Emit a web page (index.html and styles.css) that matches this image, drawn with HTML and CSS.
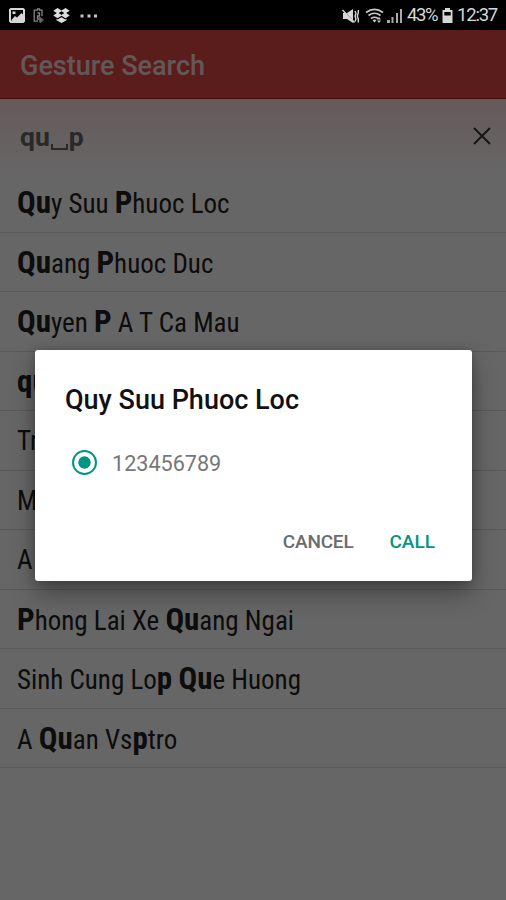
FILE: index.html
```html
<!DOCTYPE html>
<html lang="en">

<head>
  <meta charset="UTF-8" />
  <title>Gesture Search</title>
  <link rel="stylesheet" href="styles.css">
</head>

<body>
  <div class="status-bar">
    <div class="status-left">
      <svg class="ic-image" width="16" height="15" viewBox="0 0 16 15">
        <path fill="#d6d6d6" fill-rule="evenodd" d="M1.500 0h13L16 1.500V13.500L14.500 15h-13L0 13.500V1.500zM2 2v10.800h12V2z" />
        <path fill="#d6d6d6" d="M2.500 12L6 8l2 1.500L12.500 5l1.500 1.500V13H2.500zM3.500 3.500h3v2.500h-3z" />
      </svg>
      <svg class="ic-battery-saver" width="12" height="16" viewBox="0 0 12 16" fill="none" stroke="#858585" stroke-width="1.300">
        <path d="M3 2.200h1.500V.8h2v1.400H9V8M3 2.200H1.200v11H5M4.500 5h2v3h-2v3h2" />
        <path d="M6 8.500l4.500 3.500-3.500 3z" fill="#666" stroke="#666" stroke-width=".8" />
      </svg>
      <svg class="ic-dropbox" width="17" height="15" viewBox="0 0 17 15">
        <path fill="#dedede" d="M4.500 0L8.500 2.500l4-2.500 4.200 2.700-3.500 2.400 3.500 2.400-4.200 2.700-4-2.500-4 2.500L.3 7.500l3.500-2.400L.3 2.700zM8.500 9.200l3.800 2.300 1.200-.7v1.500l-5 2.700-5-2.700v-1.500l1.200.7z" />
        <path fill="#000" d="M8.500 3.300l2.800 1.800-2.800 1.800-2.800-1.800z" />
      </svg>
      <svg class="ic-more" width="18" height="4" viewBox="0 0 18 4">
        <path fill="#c4c4c4" d="M.5.500h3v3h-3zM7.500.500h3v3h-3zM14 .5h3v3h-3z" />
      </svg>
    </div>
    <div class="status-right">
      <svg class="ic-mute" width="18" height="16" viewBox="0 0 18 16">
        <path fill="#d6d6d6" d="M1 5h4l6-4v14l-6-4H1z" />
        <path fill="none" stroke="#000" stroke-width="1" d="M1.500 2l11 12.500" />
        <path fill="none" stroke="#d6d6d6" stroke-width="1.400" d="M.5 2l12 12.500M13 3l1 2.500-1 2.500 1 3-1 2.500M16.300 2v3l-1 3 1 3v3.500" />
      </svg>
      <svg class="ic-wifi" width="19" height="16" viewBox="0 0 19 16" fill="none" stroke="#c8c8c8">
        <path stroke-width="1.700" d="M1 4.500Q9.500-1.800 18 4.500M3.500 7.500q6-4.500 12 0M6 10.500q3.500-2.500 7 0" />
        <path fill="#c8c8c8" stroke="none" d="M7.500 12.200q2-1.500 4 0l-2 2.300zM12 11.500l2-2.500 2 2.500zM12 12.500h4l-2 2.500z" />
      </svg>
      <svg class="ic-signal" width="16" height="15" viewBox="0 0 16 15">
        <path fill="#a9a9a9" d="M0 12h3v3H0zM4.500 9h2v6h-2zM9 5h2v10H9zM13 1h2v14h-2z" />
      </svg>
      <span class="percent">43%</span>
      <svg class="ic-battery" width="11" height="15" viewBox="0 0 11 15">
        <path fill="#d6d6d6" fill-rule="evenodd" d="M3 0h5v2h2.500v13H.5V2H3zM2.300 4v3.500h6.400V4z" />
      </svg>
      <span class="clock">12:37</span>
    </div>
  </div>

  <div class="app">
    <div class="header"><span>Gesture Search</span></div>
    <div class="query">
      <span class="query-text">qu<i class="space"></i>p</span>
      <svg class="clear" width="18" height="18" viewBox="0 0 18 18" fill="none" stroke="#333" stroke-width="1.900">
        <path d="M1 1l16 16M17 1L1 17" />
      </svg>
    </div>
    <div class="results">
      <div class="row"><span><b>Qu</b>y Suu <b>P</b>huoc Loc</span></div>
      <div class="row"><span><b>Qu</b>ang <b>P</b>huoc Duc</span></div>
      <div class="row"><span><b>Qu</b>yen <b>P</b> A T Ca Mau</span></div>
      <div class="row"><span><b>qu</b></span></div>
      <div class="row"><span>Tr</span></div>
      <div class="row"><span>M</span></div>
      <div class="row"><span>A</span></div>
      <div class="row"><span><b>P</b>hong Lai Xe <b>Qu</b>ang Ngai</span></div>
      <div class="row"><span>Sinh Cung Lo<b>p</b> <b>Qu</b>e Huong</span></div>
      <div class="row"><span>A <b>Qu</b>an Vs<b>p</b>tro</span></div>
    </div>
  </div>

  <div class="overlay">
    <div class="dialog">
      <div class="dialog-title">Quy Suu Phuoc Loc</div>
      <div class="option">
        <div class="radio"></div>
        <span class="number">123456789</span>
      </div>
      <div class="actions">
        <span class="cancel">CANCEL</span>
        <span class="call">CALL</span>
      </div>
    </div>
  </div>
</body>

</html>
```

FILE: styles.css
```css
body {
  margin: 0;
  height: 900px;
  overflow: hidden;
  background: #fff;
  font-family: Roboto, "Liberation Sans", sans-serif;
}

.status-bar {
  display: flex;
  justify-content: space-between;
  height: 30px;
  box-sizing: border-box;
  padding: 1px 9px 0;
  background: #000;
  color: #d6d6d6;
}

.status-left,
.status-right {
  display: flex;
  align-items: center;
}

.ic-battery-saver {
  margin-left: 8px;
}

.ic-dropbox {
  margin-left: 8px;
}

.ic-more {
  margin-left: 10px;
}

.ic-wifi {
  margin-left: 5px;
}

.ic-signal {
  margin-left: 3px;
}

.percent,
.clock {
  font-size: 18.5px;
  line-height: 29px;
  white-space: nowrap;
}

.percent {
  width: 30px;
  margin-left: 4px;
  letter-spacing: -1.4px;
}

.ic-battery {
  margin-left: 5px;
}

.clock {
  width: 40px;
  margin-left: 4px;
  letter-spacing: -1.2px;
}

.app {
  height: 870px;
  background: #fff;
}

.header {
  height: 69px;
  box-sizing: border-box;
  padding-left: 20px;
  border-bottom: 1px solid #b01d1d;
  background: #e34646;
  color: #fff;
  font-size: 27px;
  font-weight: 500;
  line-height: 73px;
}

.header span {
  opacity: 0.8;
}

.query {
  display: flex;
  align-items: center;
  justify-content: space-between;
  height: 74px;
  box-sizing: border-box;
  padding: 0 15px 0 20px;
  background: linear-gradient(#ffe0e0, #fff);
}

.query-text {
  padding-top: 2px;
  color: #666;
  font-size: 26.5px;
  font-weight: 700;
  line-height: 74px;
}

.space {
  display: inline-block;
  width: 13px;
  height: 4px;
  margin: 0 1px -4px 1px;
  border: 2.500px solid #666;
  border-top: 0;
}

.row {
  height: 59.55px;
  box-sizing: border-box;
  padding-left: 17px;
  border-bottom: 1.500px solid #dedede;
  color: #222;
  font-family: "Roboto Condensed", Roboto, sans-serif;
  font-size: 27px;
  font-stretch: 75%;
  line-height: 60px;
  white-space: nowrap;
}

.row b {
  font-size: 31px;
}

/* dims the app but not the status bar */
.overlay {
  position: absolute;
  top: 30px;
  left: 0;
  display: flex;
  align-items: center;
  width: 506px;
  height: 870px;
  background: rgba(0, 0, 0, 0.6);
}

.dialog {
  width: 437px;
  height: 231px;
  box-sizing: border-box;
  margin-left: 35px;
  padding: 30px 37px 0 30px;
  border-radius: 3px;
  background: #fff;
  box-shadow: 0 12px 24px rgba(0, 0, 0, 0.35), 0 0 10px rgba(0, 0, 0, 0.2);
}

.dialog-title {
  color: #111;
  font-size: 27px;
  font-weight: 500;
  line-height: 40px;
}

.option {
  display: flex;
  align-items: center;
  height: 40px;
  margin-top: 23px;
  padding-left: 7px;
}

.radio {
  width: 25px;
  height: 25px;
  box-sizing: border-box;
  border: 2.500px solid #009682;
  border-radius: 50%;
  background: radial-gradient(circle, #009682 5.800px, transparent 6.500px);
}

.number {
  margin-left: 15px;
  padding-top: 2px;
  color: #777;
  font-size: 21.6px;
}

.actions {
  display: flex;
  justify-content: flex-end;
  gap: 36px;
  margin-top: 44px;
  font-size: 19px;
  font-weight: 500;
  line-height: 29px;
}

.cancel {
  color: #6b6b6b;
  letter-spacing: -0.2px;
}

.call {
  color: #009682;
}
```
